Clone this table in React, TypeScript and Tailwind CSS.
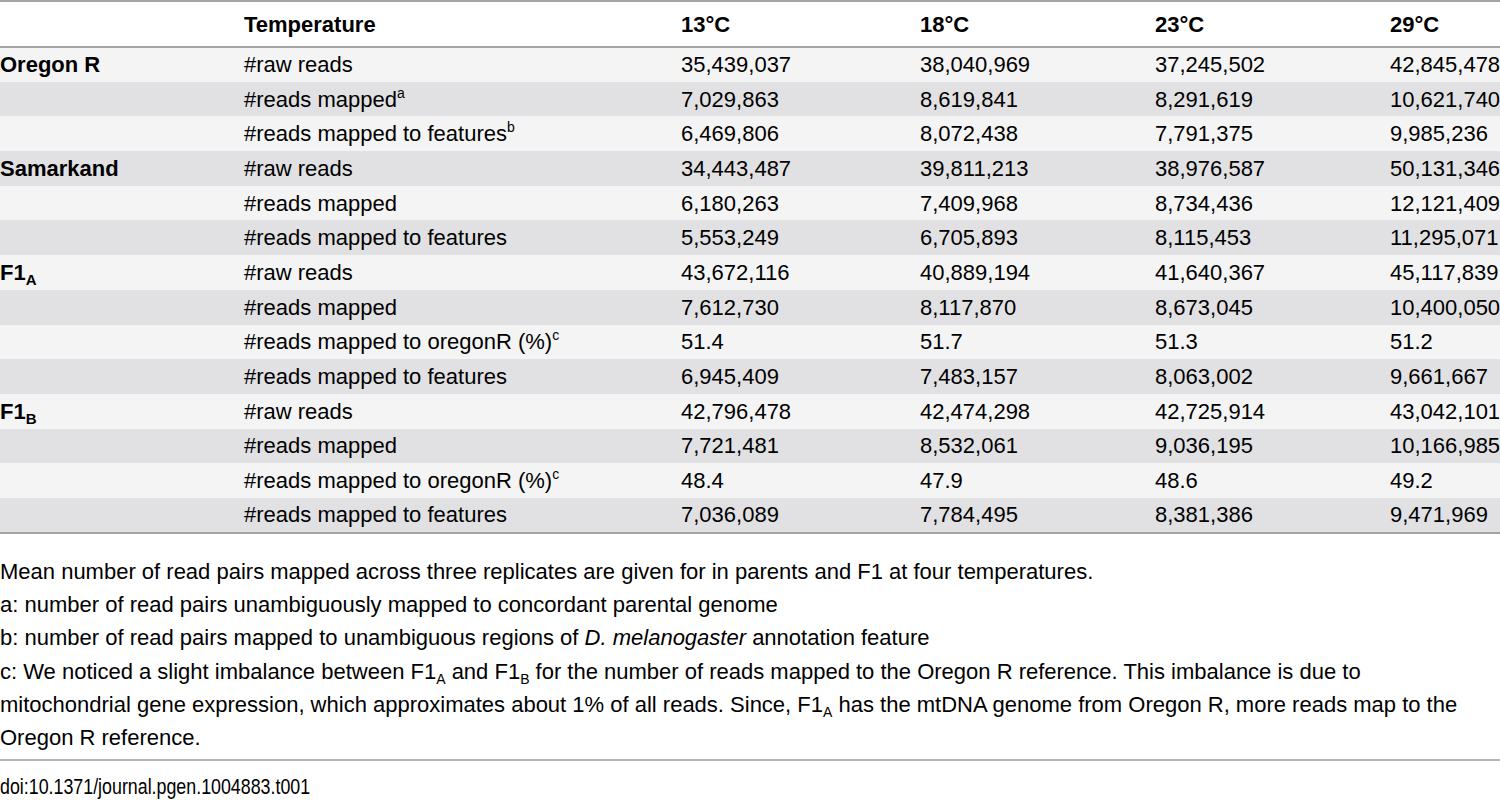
import React from 'react';

type Row = {
  group?: React.ReactNode;
  label: React.ReactNode;
  values: string[];
};

const Sup = ({ children }: { children: string }) => (
  <span className="relative top-[-9px] text-[14px] leading-none">{children}</span>
);

const Sub = ({ children, bold }: { children: string; bold?: boolean }) => (
  <span className={`relative top-[5px] leading-none ${bold ? 'text-[15px]' : 'text-[14px]'}`}>{children}</span>
);

const rows: Row[] = [
  { group: 'Oregon R', label: '#raw reads', values: ['35,439,037', '38,040,969', '37,245,502', '42,845,478'] },
  { label: <>#reads mapped<Sup>a</Sup></>, values: ['7,029,863', '8,619,841', '8,291,619', '10,621,740'] },
  { label: <>#reads mapped to features<Sup>b</Sup></>, values: ['6,469,806', '8,072,438', '7,791,375', '9,985,236'] },
  { group: 'Samarkand', label: '#raw reads', values: ['34,443,487', '39,811,213', '38,976,587', '50,131,346'] },
  { label: '#reads mapped', values: ['6,180,263', '7,409,968', '8,734,436', '12,121,409'] },
  { label: '#reads mapped to features', values: ['5,553,249', '6,705,893', '8,115,453', '11,295,071'] },
  { group: <>F1<Sub bold>A</Sub></>, label: '#raw reads', values: ['43,672,116', '40,889,194', '41,640,367', '45,117,839'] },
  { label: '#reads mapped', values: ['7,612,730', '8,117,870', '8,673,045', '10,400,050'] },
  { label: <>#reads mapped to oregonR (%)<Sup>c</Sup></>, values: ['51.4', '51.7', '51.3', '51.2'] },
  { label: '#reads mapped to features', values: ['6,945,409', '7,483,157', '8,063,002', '9,661,667'] },
  { group: <>F1<Sub bold>B</Sub></>, label: '#raw reads', values: ['42,796,478', '42,474,298', '42,725,914', '43,042,101'] },
  { label: '#reads mapped', values: ['7,721,481', '8,532,061', '9,036,195', '10,166,985'] },
  { label: <>#reads mapped to oregonR (%)<Sup>c</Sup></>, values: ['48.4', '47.9', '48.6', '49.2'] },
  { label: '#reads mapped to features', values: ['7,036,089', '7,784,495', '8,381,386', '9,471,969'] },
];

export default function App() {
  return (
    <div className="w-[1500px] h-[800px] bg-white text-black overflow-hidden" style={{ fontFamily: '"Liberation Sans", Arial, sans-serif' }}>
      <table className="w-[1500px] table-fixed border-collapse text-[22px]">
        <colgroup>
          <col className="w-[244px]" />
          <col className="w-[437px]" />
          <col className="w-[239px]" />
          <col className="w-[235px]" />
          <col className="w-[235px]" />
          <col className="w-[110px]" />
        </colgroup>
        <thead>
          <tr className="h-[46px] border-t-2 border-b-2 border-[#a3a3a3] bg-white">
            <th></th>
            <th className="text-left font-bold">Temperature</th>
            <th className="text-left font-bold">13°C</th>
            <th className="text-left font-bold">18°C</th>
            <th className="text-left font-bold">23°C</th>
            <th className="text-left font-bold">29°C</th>
          </tr>
        </thead>
        <tbody className="border-b-2 border-[#a3a3a3]">
          {rows.map((r, i) => (
            <tr key={i} className={`h-[34.7px] ${i % 2 === 0 ? 'bg-[#f4f4f4]' : 'bg-[#e1e1e3]'}`}>
              <td className="font-bold whitespace-nowrap">{r.group}</td>
              <td className="whitespace-nowrap">{r.label}</td>
              {r.values.map((v, j) => (
                <td key={j} className="whitespace-nowrap">{v}</td>
              ))}
            </tr>
          ))}
        </tbody>
      </table>

      <div className="mt-[21px] pr-[20px] text-[22px] leading-[33.3px]">
        <p>Mean number of read pairs mapped across three replicates are given for in parents and F1 at four temperatures.</p>
        <p>a: number of read pairs unambiguously mapped to concordant parental genome</p>
        <p>b: number of read pairs mapped to unambiguous regions of <i>D. melanogaster</i> annotation feature</p>
        <p>
          c: We noticed a slight imbalance between F1<Sub>A</Sub> and F1<Sub>B</Sub> for the number of reads mapped to the Oregon R reference. This imbalance is due to mitochondrial gene expression, which approximates about 1% of all reads. Since, F1<Sub>A</Sub> has the mtDNA genome from Oregon R, more reads map to the Oregon R reference.
        </p>
      </div>

      {/* doi line uses a narrow face in the source */}
      <div className="mt-[5px] border-t-2 border-[#b5b5b5] pt-[13px]">
        <div className="inline-block origin-left scale-x-[0.81] text-[22px] leading-[26px]">
          doi:10.1371/journal.pgen.1004883.t001
        </div>
      </div>
    </div>
  );
}
